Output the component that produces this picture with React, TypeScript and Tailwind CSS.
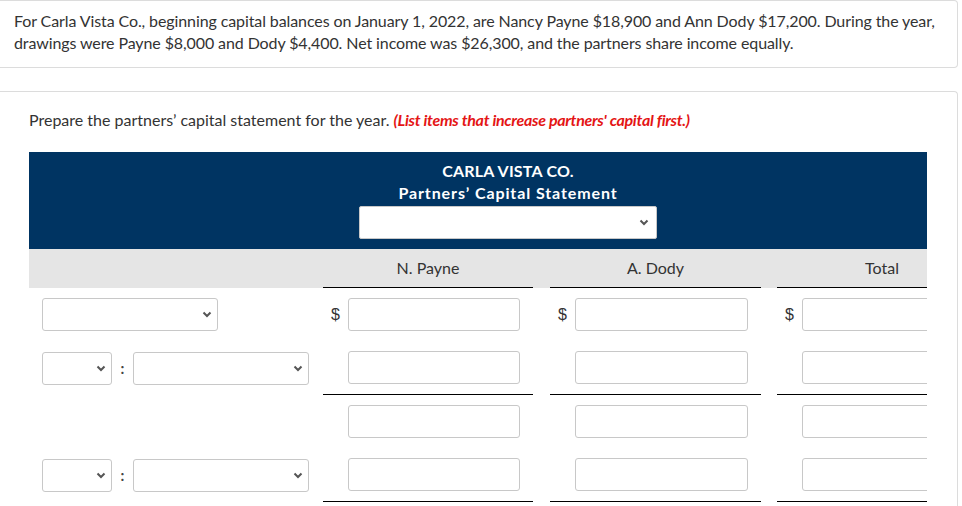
import React from "react";

const Chevron = ({ className = "" }: { className?: string }) => (
  <svg
    className={className}
    width="10"
    height="7"
    viewBox="0 0 10 7"
    fill="none"
    stroke="#555"
    strokeWidth="2"
  >
    <path d="M1.5 1.5 L5 5 L8.5 1.5" />
  </svg>
);

const SelectBox = ({ w }: { w: string }) => (
  <div
    className={`${w} h-[33px] border border-[#c8c8c8] rounded-[3px] bg-white flex items-center justify-end pr-[5px]`}
  >
    <Chevron />
  </div>
);

const Amount = ({ dollar, width }: { dollar?: boolean; width: string }) => (
  <div className="flex items-center">
    <span className="w-[25px] text-center text-[16px] text-[#333] font-['Liberation_Sans',sans-serif]">
      {dollar ? "$" : ""}
    </span>
    <div className={`${width} h-[33px] border border-[#c8c8c8] rounded-[3px] bg-white`} />
  </div>
);

const Row = ({
  kind,
  dollar,
  line,
}: {
  kind: "single" | "pair" | "none";
  dollar?: boolean;
  line?: boolean;
}) => {
  const cell = `py-[10px] ${line ? "border-b border-black" : ""}`;
  return (
    <div className="flex">
      <div className="w-[294px] pl-[13px] py-[10px] flex items-center">
        {kind === "single" && <SelectBox w="w-[176px]" />}
        {kind === "pair" && (
          <>
            <SelectBox w="w-[70px]" />
            <span className="w-[21px] text-center text-[15px] font-bold text-[#444]">:</span>
            <SelectBox w="w-[176px]" />
          </>
        )}
      </div>
      <div className={`w-[210px] ${cell}`}>
        <Amount dollar={dollar} width="w-[172px]" />
      </div>
      <div className={`w-[211px] ml-[17px] ${cell}`}>
        <Amount dollar={dollar} width="w-[173px]" />
      </div>
      <div className={`w-[210px] ml-[16px] ${cell}`}>
        <Amount dollar={dollar} width="w-[173px]" />
      </div>
    </div>
  );
};

export default function App() {
  return (
    <div className="w-[962px] h-[506px] overflow-hidden bg-white font-['Lato','Open_Sans',sans-serif] text-[#333]">
      <div className="w-[958px] border border-l-0 border-[#dcdcdc] rounded-r-[4px] pl-[14px] pr-[8px] pt-[9px] pb-[13px] text-[16px] leading-[22px] tracking-[-0.1px]">
        <p>
          For Carla Vista Co., beginning capital balances on January 1, 2022, are Nancy Payne $18,900 and Ann Dody
          $17,200. During the year, drawings were Payne $8,000 and Dody $4,400. Net income was $26,300, and the partners
          share income equally.
        </p>
      </div>

      <div className="mt-[23px] w-[958px] h-[500px] border-t border-r border-[#dcdcdc] rounded-tr-[4px] pl-[29px] pt-[17px]">
        <p className="text-[16px] leading-[22px]">
          Prepare the partners’ capital statement for the year.{" "}
          <span className="text-[#e41515] font-bold italic tracking-[-0.3px]">
            (List items that increase partners' capital first.)
          </span>
        </p>

        <div className="mt-[21px] w-[898px] overflow-hidden">
          <div className="w-[958px]">
            <div className="bg-[#003462] h-[97px] pt-[8px] flex flex-col items-center text-white font-bold text-[16px] leading-[22px]">
              <div className="tracking-[0.2px]">CARLA VISTA CO.</div>
              <div className="tracking-[0.9px]">Partners’ Capital Statement</div>
              <div className="mt-[2px] w-[298px] h-[33px] bg-white border border-[#c8c8c8] rounded-[2px] flex items-center justify-end pr-[7px]">
                <Chevron />
              </div>
            </div>

            <div className="flex bg-[#e5e5e5] h-[39px] text-[16px] text-[#333]">
              <div className="w-[294px]" />
              <div className="w-[210px] border-b border-black flex items-center justify-center">N. Payne</div>
              <div className="w-[211px] ml-[17px] border-b border-black flex items-center justify-center">A. Dody</div>
              <div className="w-[210px] ml-[16px] border-b border-black flex items-center justify-center">Total</div>
            </div>

            <Row kind="single" dollar />
            <Row kind="pair" line />
            <Row kind="none" />
            <Row kind="pair" line />
          </div>
        </div>
      </div>
    </div>
  );
}
